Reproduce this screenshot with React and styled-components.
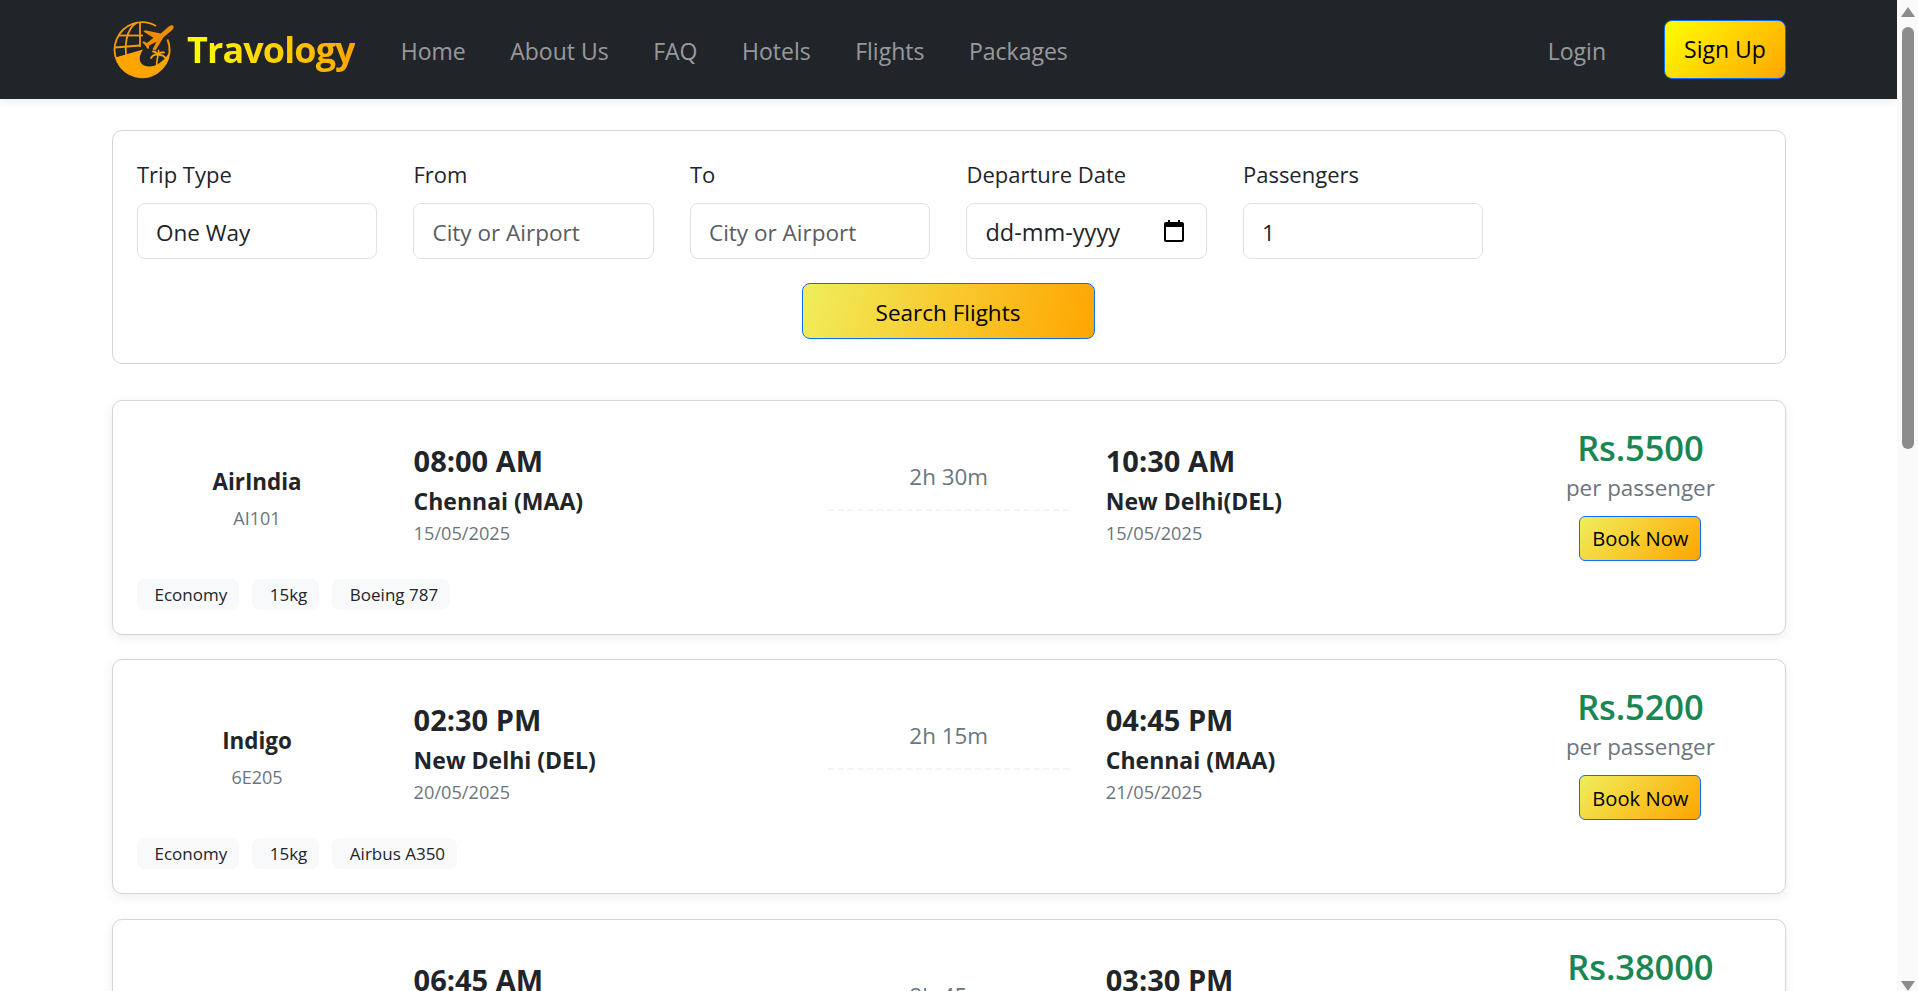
import React from "react"
import styled, { createGlobalStyle } from "styled-components"

const GlobalStyle = createGlobalStyle`
  html, body {
    margin: 0;
    height: 991px;
    overflow: hidden;
    background: #fff;
    color: #212529;
    font-family: "Open Sans", "Noto Sans", "Liberation Sans", sans-serif;
    font-size: 22px;
  }
  * { box-sizing: border-box; }
`

const Shell = styled.div`
  display: flex;
  height: 991px;
  overflow: hidden;
`

const Page = styled.div`
  flex: 1;
  min-width: 0;
  overflow: hidden;
`

const Navbar = styled.nav`
  display: flex;
  align-items: center;
  height: 99px;
  padding: 0 111px 0 112px;
  background: #212529;
  box-shadow: 0 2px 8px rgba(0, 0, 0, .08);
`

const Brand = styled.a`
  display: flex;
  align-items: center;
  gap: 11px;
  margin-right: 46px;
`

const BrandName = styled.span`
  font-size: 36px;
  font-weight: 700;
  letter-spacing: -.9px;
  background: linear-gradient(90deg, #ffff00, #ffa500);
  -webkit-background-clip: text;
  background-clip: text;
  color: transparent;
`

const NavLinks = styled.div`
  display: flex;
  gap: 44.5px;
  flex: 1;
  padding-top: 2px;
`

const NavLink = styled.a`
  font-size: 23px;
  color: rgba(255, 255, 255, .55);
`

const LoginLink = styled(NavLink)`
  margin-right: 58px;
  padding-top: 2px;
`

const SignUp = styled.button`
  width: 122px;
  height: 59px;
  border: 1px solid #0d6efd;
  border-radius: 8px;
  background: linear-gradient(135deg, #ffff00, #ffa500);
  color: #000;
  font: inherit;
  font-size: 23px;
  padding: 0 0 2px;
`

const Content = styled.main`
  padding: 31px 111px 0 112px;
  display: flex;
  flex-direction: column;
  gap: 24.3px;
`

const SearchCard = styled.form`
  height: 234px;
  margin-bottom: 11.7px;
  padding: 25px 24px 0;
  border: 1px solid #d4d5d6;
  border-radius: 10px;
  background: #fff;
`

const FieldRow = styled.div`
  display: grid;
  grid-template-columns: repeat(5, 240.2px);
  column-gap: 36.3px;
`

const Field = styled.label`
  display: block;
`

const FieldLabel = styled.span`
  display: block;
  height: 47px;
  padding-top: 3px;
  font-size: 22px;
  line-height: 30px;
`

const InputWrap = styled.div`
  position: relative;
`

const Input = styled.input`
  display: block;
  width: 100%;
  height: 56px;
  padding: 2px 18px 0;
  border: 1px solid #dee2e6;
  border-radius: 8px;
  background: #fff;
  color: #212529;
  font: inherit;
  font-size: ${props => props.$size || "22.5px"};
  outline: none;
  &::placeholder { color: #595c5f; opacity: 1; }
`

const CalendarIcon = styled.svg`
  position: absolute;
  top: 17px;
  right: 23px;
`

const SearchRow = styled.div`
  display: flex;
  justify-content: center;
  margin-top: 24px;
  padding-right: 2px;
`

const SearchButton = styled.button`
  width: 293px;
  height: 56px;
  padding: 2px 0 0;
  border: 1px solid #0d6efd;
  border-radius: 8px;
  background: linear-gradient(105deg, #f0ee5c, #ffa500);
  color: #000;
  font: inherit;
  font-size: 22.5px;
`

const FlightCard = styled.article`
  height: 235px;
  flex: none;
  padding: 0 24px;
  border: 1px solid #d4d5d6;
  border-radius: 10px;
  background: #fff;
  box-shadow: 0 3px 12px rgba(0, 0, 0, .07);
`

const FlightRow = styled.div`
  display: grid;
  grid-template-columns: 240px 378px 241px 378px 240px;
  column-gap: 36.6px;
  height: 178px;
  padding-top: 24px;
`

const AirlineCol = styled.div`
  text-align: center;
  padding-top: 42px;
`

const AirlineName = styled.div`
  font-size: 22.4px;
  font-weight: 700;
  line-height: 30px;
`

const FlightNo = styled.div`
  margin-top: 9px;
  font-size: 18px;
  line-height: 24px;
  color: #6c757d;
`

const TimeCol = styled.div`
  padding-top: 17px;
`

const Time = styled.div`
  font-size: 29px;
  font-weight: 700;
  line-height: 38px;
`

const City = styled.div`
  margin-top: 6px;
  font-size: 23px;
  font-weight: 700;
  line-height: 30px;
`

const DateText = styled.div`
  margin-top: 5px;
  font-size: 18.2px;
  line-height: 24px;
  color: #6c757d;
`

const DurationCol = styled.div`
  text-align: center;
  padding-top: 37px;
`

const Duration = styled.div`
  font-size: 22.4px;
  line-height: 30px;
  color: #6c757d;
`

const DashLine = styled.div`
  margin-top: 17px;
  border-top: 2px dashed #f3f4f5;
`

const PriceCol = styled.div`
  text-align: center;
`

const Price = styled.div`
  font-size: 34.5px;
  font-weight: 600;
  line-height: 46px;
  letter-spacing: -.1px;
  color: #198754;
`

const PerPassenger = styled.div`
  margin-top: 2px;
  font-size: 22.4px;
  line-height: 30px;
  color: #6c757d;
`

const BookButton = styled.button`
  display: block;
  width: 122px;
  height: 45px;
  margin: 13px auto 0;
  padding: 0;
  border: 1px solid #0d6efd;
  border-radius: 6px;
  background: linear-gradient(135deg, #f0ee5c, #ffa500);
  color: #000;
  font: inherit;
  font-size: 20.2px;
`

const Tags = styled.div`
  display: flex;
  gap: 13px;
`

const Tag = styled.span`
  height: 31px;
  padding: 0 12px 0 17.5px;
  border-radius: 8px;
  background: #f8f9fa;
  font-size: 17px;
  line-height: 31px;
`

const Scrollbar = styled.div`
  position: relative;
  flex: none;
  width: 21px;
  background: #fafafa;
`

const ScrollThumb = styled.div`
  position: absolute;
  top: 27px;
  left: 5px;
  width: 12px;
  height: 422px;
  border-radius: 6px;
  background: #8c8c8c;
`

const ScrollArrow = styled.svg`
  position: absolute;
  left: 4px;
  ${props => props.$down ? "bottom: 0;" : "top: 7px;"}
`

const Logo = () => (
  <svg width="64" height="60" viewBox="0 0 64 60" aria-label="Travology logo">
    <g fill="none" stroke="#f39c0a" strokeWidth="1.8">
      <path d="M44 6A27.5 27.5 0 1 0 57.4 33" />
      <path d="M55.5 19.5A27.5 27.5 0 0 1 57.4 33" />
      <path d="M25 2.5C14 9 12 25 15 42" />
      <path d="M28 2.5V27" />
      <path d="M7 15.5H31" />
      <path d="M3 27.5L28 25.5" />
    </g>
    <path fill="#ffa500" d="M3.5 37.5L31 29.5C26.5 36 26.5 43 32 45.5C40 49 50 44 57 33C56.5 46 44 57.5 30 57.5C17 57.5 7 49 3.5 37.5Z" />
    <path fill="#f08c00" d="M60.8 5.5C62.6 6.8 61.5 9.2 58.5 11.5L51.5 17.3L43.5 30.5L40.5 29.5L44.5 21.7L37.2 25.5L36.8 29L35 28.3L33.2 25.2L30.4 22.4L31.6 21.2L35 23L41.5 17.8L31.3 11.6L33.2 10.2L48.8 13.5L55 8C57.2 6 59.4 4.6 60.8 5.5Z" />
    <g fill="none" stroke="#f8a50a" strokeLinecap="round">
      <path strokeWidth="1.6" d="M46 35Q45 40 44.5 46" />
      <path strokeWidth="1.8" d="M46 35Q41.5 33.5 39 38" />
      <path strokeWidth="1.8" d="M46 35Q44 31.5 41 31.5" />
      <path strokeWidth="1.8" d="M46 35Q47 31.5 46.5 30.5" />
      <path strokeWidth="1.8" d="M46 35Q49 31.5 52 32.5" />
      <path strokeWidth="1.8" d="M46 35Q51 34.5 53.5 38" />
    </g>
  </svg>
)

const flights = [
  {
    airline: "AirIndia", code: "AI101",
    depTime: "08:00 AM", depCity: "Chennai (MAA)", depDate: "15/05/2025",
    duration: "2h 30m",
    arrTime: "10:30 AM", arrCity: "New Delhi(DEL)", arrDate: "15/05/2025",
    price: "Rs.5500", tags: ["Economy", "15kg", "Boeing 787"],
  },
  {
    airline: "Indigo", code: "6E205",
    depTime: "02:30 PM", depCity: "New Delhi (DEL)", depDate: "20/05/2025",
    duration: "2h 15m",
    arrTime: "04:45 PM", arrCity: "Chennai (MAA)", arrDate: "21/05/2025",
    price: "Rs.5200", tags: ["Economy", "15kg", "Airbus A350"],
  },
  {
    airline: "Vistara", code: "UK812",
    depTime: "06:45 AM", depCity: "Mumbai (BOM)", depDate: "25/05/2025",
    duration: "8h 45m",
    arrTime: "03:30 PM", arrCity: "London (LHR)", arrDate: "25/05/2025",
    price: "Rs.38000", tags: ["Business", "30kg", "Boeing 787"],
  },
]

const App = () => {
  return <Shell>
    <GlobalStyle />
    <Page>
      <Navbar>
        <Brand>
          <Logo />
          <BrandName>Travology</BrandName>
        </Brand>
        <NavLinks>
          {["Home", "About Us", "FAQ", "Hotels", "Flights", "Packages"].map(item =>
            <NavLink key={item}>{item}</NavLink>
          )}
        </NavLinks>
        <LoginLink>Login</LoginLink>
        <SignUp>Sign Up</SignUp>
      </Navbar>

      <Content>
        <SearchCard>
          <FieldRow>
            <Field>
              <FieldLabel>Trip Type</FieldLabel>
              <Input readOnly value="One Way" />
            </Field>
            <Field>
              <FieldLabel>From</FieldLabel>
              <Input placeholder="City or Airport" />
            </Field>
            <Field>
              <FieldLabel>To</FieldLabel>
              <Input placeholder="City or Airport" />
            </Field>
            <Field>
              <FieldLabel>Departure Date</FieldLabel>
              <InputWrap>
                <Input readOnly value="dd-mm-yyyy" $size="23.5px" />
                <CalendarIcon width="20" height="22" viewBox="0 0 20 22">
                  <path fill="#000" d="M4 0h2v2h8V0h2v2h2a2 2 0 0 1 2 2v16a2 2 0 0 1-2 2H2a2 2 0 0 1-2-2V4a2 2 0 0 1 2-2h2zM2 7v13h16V7z" />
                </CalendarIcon>
              </InputWrap>
            </Field>
            <Field>
              <FieldLabel>Passengers</FieldLabel>
              <Input readOnly value="1" />
            </Field>
          </FieldRow>
          <SearchRow>
            <SearchButton type="button">Search Flights</SearchButton>
          </SearchRow>
        </SearchCard>

        {flights.map(flight =>
          <FlightCard key={flight.code}>
            <FlightRow>
              <AirlineCol>
                <AirlineName>{flight.airline}</AirlineName>
                <FlightNo>{flight.code}</FlightNo>
              </AirlineCol>
              <TimeCol>
                <Time>{flight.depTime}</Time>
                <City>{flight.depCity}</City>
                <DateText>{flight.depDate}</DateText>
              </TimeCol>
              <DurationCol>
                <Duration>{flight.duration}</Duration>
                <DashLine />
              </DurationCol>
              <TimeCol>
                <Time>{flight.arrTime}</Time>
                <City>{flight.arrCity}</City>
                <DateText>{flight.arrDate}</DateText>
              </TimeCol>
              <PriceCol>
                <Price>{flight.price}</Price>
                <PerPassenger>per passenger</PerPassenger>
                <BookButton type="button">Book Now</BookButton>
              </PriceCol>
            </FlightRow>
            <Tags>
              {flight.tags.map(tag => <Tag key={tag}>{tag}</Tag>)}
            </Tags>
          </FlightCard>
        )}
      </Content>
    </Page>

    <Scrollbar>
      <ScrollArrow width="14" height="10" viewBox="0 0 14 10">
        <path fill="#8c8c8c" d="M7 0L14 10H0z" />
      </ScrollArrow>
      <ScrollThumb />
      <ScrollArrow $down width="14" height="10" viewBox="0 0 14 10">
        <path fill="#8c8c8c" d="M0 0H14L7 10z" />
      </ScrollArrow>
    </Scrollbar>
  </Shell>
}

export default App
